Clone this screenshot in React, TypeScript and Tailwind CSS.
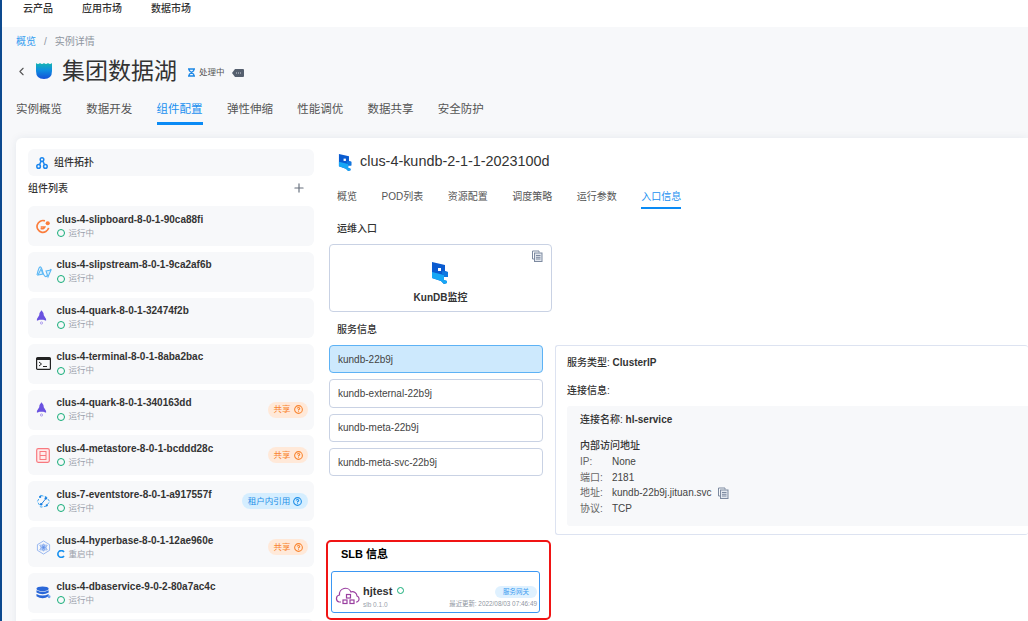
import { ReactNode } from 'react';
import { Plus, ChevronLeft } from 'lucide-react';

type Item = {
    name: string;
    icon: ReactNode;
    status?: string;
    badge?: 'share' | 'tenant';
};

const KunLogo = ({ className }: { className: string }) => (
    <svg viewBox="0 0 17 22" className={className}>
        <path d="M0 0 L13 3 V9 L16 10 V15 H12 V18 L15 19 V21 L12 22 L9 19 L0 16 Z" fill="#0a5bd0" />
        <path d="M0 10 L12 13 V18 L15 19 V21 L12 22 L9 19 L0 16 Z" fill="#17a7f5" />
        <path d="M10 9 L16 10 V15 H12 V13 L10 12.5 Z" fill="#0f78e0" />
        <rect x="6" y="6" width="3" height="3" fill="#fff" />
    </svg>
);

const ShieldLogo = () => (
    <svg viewBox="0 0 18 18" className="h-[18px] w-[18px]">
        <defs>
            <linearGradient id="shield" x1="0" y1="0" x2="0" y2="1">
                <stop offset="0" stopColor="#15b5b0" />
                <stop offset="0.45" stopColor="#0f8fe0" />
                <stop offset="1" stopColor="#1550d8" />
            </linearGradient>
        </defs>
        <path
            d="M1 1 Q3 3 5 1 Q7 3 9 1 Q11 3 13 1 Q15 3 17 1 V9 Q17 17 9 17 Q1 17 1 9 Z"
            fill="url(#shield)"
        />
    </svg>
);

const CopyIcon = ({ className }: { className: string }) => (
    <svg viewBox="0 0 12 12" fill="none" stroke="#7d8aa0" strokeWidth="1" className={className}>
        <path d="M3 9 H1.5 V1 H8 V2.5" />
        <rect x="3.5" y="3" width="7.5" height="8.5" fill="#e4e8ef" />
        <path d="M5 5.5 H9.5 M5 7.3 H9.5 M5 9 H9.5" />
    </svg>
);

const Help = ({ tone }: { tone: string }) => (
    <svg viewBox="0 0 10 10" fill="none" stroke={tone} strokeWidth="1.2" className="h-[9px] w-[9px]">
        <circle cx="5" cy="5" r="4.3" />
        <path d="M3.6 4 Q3.6 2.7 5 2.7 Q6.4 2.7 6.4 3.9 Q6.4 4.7 5 5.2 V6" />
        <path d="M5 7 V7.8" />
    </svg>
);

const SlipboardIcon = () => (
    <svg viewBox="0 0 16 16" fill="none" className="h-[15px] w-[15px]">
        <path d="M13.5 9.5 A6.3 6.3 0 1 1 9.5 2" stroke="#fb7d3c" strokeWidth="1.8" />
        <path d="M5 8.5 H9.5 A3 3 0 0 1 5 10" stroke="#fb7d3c" strokeWidth="1.6" />
        <circle cx="12.5" cy="4.5" r="2.2" fill="#fb7d3c" />
    </svg>
);

const StreamIcon = () => (
    <svg viewBox="0 0 16 14" fill="none" stroke="#5cb8f5" strokeWidth="1.1" className="h-[14px] w-[16px]">
        <path d="M1 10 Q3 1 4.5 2 Q6 3 7 8 Q9 13 11 11 Q12 8 15 4" />
        <path d="M2 10 L5 4 L7 9 Z M10 6 L15 5 L12 12 Z" fill="#d5eefd" />
    </svg>
);

const RocketIcon = () => (
    <svg viewBox="0 0 12 16" className="h-[15px] w-[11px]">
        <path d="M6 0 Q8.5 2.5 8.5 5.5 L11 9.5 V11.5 L8 10.5 H4 L1 11.5 V9.5 L3.5 5.5 Q3.5 2.5 6 0 Z" fill="#6a52e0" />
        <circle cx="6" cy="14" r="1.2" fill="none" stroke="#a797ee" />
    </svg>
);

const TerminalIcon = () => (
    <svg viewBox="0 0 15 13" className="h-[13px] w-[15px]" fill="none">
        <rect x="0.6" y="0.6" width="13.8" height="11.8" rx="1" stroke="#222" strokeWidth="1.2" />
        <rect x="1" y="1" width="13" height="2" fill="#222" />
        <path d="M3 5 L5.5 7 L3 9 M7 9.5 H11" stroke="#222" />
    </svg>
);

const MetastoreIcon = () => (
    <svg viewBox="0 0 14 15" fill="none" stroke="#f8797f" className="h-[15px] w-[14px]">
        <rect x="0.7" y="0.7" width="12.6" height="13.6" rx="1.5" strokeWidth="1.2" fill="#ffecec" />
        <rect x="4" y="3.5" width="6" height="8" />
        <path d="M4 7.5 H10" />
    </svg>
);

const EventIcon = () => (
    <svg viewBox="0 0 16 16" fill="none" stroke="#3aa3f0" className="h-[15px] w-[15px]">
        <path d="M5 1.5 L11 3 L14.5 8 L11 13 L5 14 L1.5 8 Z" strokeDasharray="3 1.5" />
        <path d="M5.5 11 L10.5 5" stroke="#1b7fe0" />
        <circle cx="10.5" cy="4.5" r="1.3" fill="#1b7fe0" stroke="none" />
        <circle cx="5.5" cy="11" r="1.3" fill="#1b7fe0" stroke="none" />
        <circle cx="11.5" cy="12" r="1.2" fill="#1b7fe0" stroke="none" />
        <circle cx="4.5" cy="3" r="1.2" fill="#1b7fe0" stroke="none" />
    </svg>
);

const HyperbaseIcon = () => (
    <svg viewBox="0 0 16 16" fill="none" stroke="#7aa3ee" strokeWidth="0.8" className="h-[15px] w-[15px]">
        <path d="M8 1 L14.5 5 V11 L8 15 L1.5 11 V5 Z" />
        <path d="M8 4 L12 10.5 H4 Z M8 12 L4 5.5 H12 Z" />
        <circle cx="8" cy="8" r="1.5" fill="#5f8fe8" />
    </svg>
);

const DbIcon = () => (
    <svg viewBox="0 0 16 14" className="h-[14px] w-[15px]" fill="#2a67d8">
        <ellipse cx="7" cy="2.5" rx="6.5" ry="2.5" />
        <path d="M0.5 4 Q7 7.5 13.5 4 V6.5 Q7 10 0.5 6.5 Z" />
        <path d="M0.5 8 Q7 11.5 13.5 8 V10.5 Q7 14.5 0.5 10.5 Z" />
        <circle cx="14" cy="11" r="1.5" fill="#6ea0f0" />
    </svg>
);

const items: Item[] = [
    { name: 'clus-4-slipboard-8-0-1-90ca88fi', icon: <SlipboardIcon /> },
    { name: 'clus-4-slipstream-8-0-1-9ca2af6b', icon: <StreamIcon /> },
    { name: 'clus-4-quark-8-0-1-32474f2b', icon: <RocketIcon /> },
    { name: 'clus-4-terminal-8-0-1-8aba2bac', icon: <TerminalIcon /> },
    { name: 'clus-4-quark-8-0-1-340163dd', icon: <RocketIcon />, badge: 'share' },
    { name: 'clus-4-metastore-8-0-1-bcddd28c', icon: <MetastoreIcon />, badge: 'share' },
    { name: 'clus-7-eventstore-8-0-1-a917557f', icon: <EventIcon />, badge: 'tenant' },
    { name: 'clus-4-hyperbase-8-0-1-12ae960e', icon: <HyperbaseIcon />, status: '重启中', badge: 'share' },
    { name: 'clus-4-dbaservice-9-0-2-80a7ac4c', icon: <DbIcon /> },
];

const mainTabs = ['实例概览', '数据开发', '组件配置', '弹性伸缩', '性能调优', '数据共享', '安全防护'];
const subTabs = ['概览', 'POD列表', '资源配置', '调度策略', '运行参数', '入口信息'];
const services = ['kundb-22b9j', 'kundb-external-22b9j', 'kundb-meta-22b9j', 'kundb-meta-svc-22b9j'];

const ComponentRow = ({ item }: { item: Item }) => (
    <div className="flex h-10 shrink-0 items-center rounded-md bg-[#f7f8fa] pl-2 pr-[6px]">
        <div className="flex w-[20.5px] shrink-0 justify-start">{item.icon}</div>
        <div className="flex min-w-0 flex-1 flex-col gap-[2px]">
            <span className="text-[10px] leading-[12px] font-bold text-[#333]">{item.name}</span>
            <div className="flex items-center gap-1 text-[8.5px] leading-[11px] text-[#9aa1ab]">
                {item.status ? (
                    <svg viewBox="0 0 8 8" fill="none" className="h-2 w-2">
                        <path d="M7 2 A3.4 3.4 0 1 0 7 6" stroke="#1590f0" strokeWidth="1.6" />
                    </svg>
                ) : (
                    <span className="h-2 w-2 rounded-full border-[1.7px] border-[#14ad78]" />
                )}
                {item.status ?? '运行中'}
            </div>
        </div>
        {item.badge === 'share' && (
            <span className="flex h-4 w-10 items-center justify-center gap-[3px] rounded-full bg-[#ffe9d9] text-[8.5px] text-[#f98530]">
                共享 <Help tone="#f98530" />
            </span>
        )}
        {item.badge === 'tenant' && (
            <span className="flex h-4 w-[66px] items-center justify-center gap-[3px] rounded-full bg-[#d5eeff] text-[8.5px] text-[#1f8fe8]">
                租户内引用 <Help tone="#1f8fe8" />
            </span>
        )}
    </div>
);

const Sidebar = () => (
    <aside className="flex w-[286px] shrink-0 flex-col">
        <div className="flex h-[27px] items-center gap-[6px] rounded-md bg-[#f7f8fa] pl-2 text-[10px] font-medium text-[#333]">
            <svg viewBox="0 0 12 12" fill="none" stroke="#1b86ee" strokeWidth="1.5" className="h-3 w-3">
                <circle cx="6" cy="2.6" r="1.8" />
                <circle cx="2.6" cy="9.4" r="1.8" />
                <circle cx="9.4" cy="9.4" r="1.8" />
                <path d="M5 4.2 L3.5 7.8 M7 4.2 L8.5 7.8" />
            </svg>
            组件拓扑
        </div>
        <div className="mt-[5px] mb-[11px] flex h-[14px] items-center justify-between pr-[8px] text-[10px] font-medium text-[#333]">
            组件列表
            <Plus size={14} strokeWidth={2} className="text-[#666f7d]" />
        </div>
        <div className="flex flex-col gap-[5.9px]">
            {items.map(item => (
                <ComponentRow key={item.name + item.badge} item={item} />
            ))}
            <div className="h-10 shrink-0 rounded-md bg-[#f7f8fa]" />
        </div>
    </aside>
);

const DetailLine = ({ label, children }: { label: string; children: ReactNode }) => (
    <div className="flex h-[15.5px] items-center">
        <span className="w-[32px] shrink-0 text-[#666]">{label}</span>
        {children}
    </div>
);

const ServicePanel = () => (
    <div className="ml-3 flex h-[190px] flex-1 flex-col rounded-[3px] border border-r-0 border-[#dde3f1] pt-[10px] pl-[11px] text-[10px]">
        <div className="h-[14px] leading-[14px] font-medium text-[#333]">
            服务类型: <span className="font-bold">ClusterIP</span>
        </div>
        <div className="mt-[14px] h-[14px] leading-[14px] font-medium text-[#333]">连接信息:</div>
        <div className="mt-[8px] flex h-[120px] flex-col rounded-l-[3px] bg-[#f7f8fa] pt-[7px] pl-[13px] text-[#444]">
            <div className="h-[14px] leading-[14px] font-medium text-[#333]">
                连接名称: <span className="font-bold">hl-service</span>
            </div>
            <div className="mt-[12px] mb-[1px] h-[14px] leading-[14px] font-medium text-[#333]">内部访问地址</div>
            <DetailLine label="IP:">None</DetailLine>
            <DetailLine label="端口:">2181</DetailLine>
            <DetailLine label="地址:">
                kundb-22b9j.jituan.svc
                <CopyIcon className="ml-[5px] h-3 w-3" />
            </DetailLine>
            <DetailLine label="协议:">TCP</DetailLine>
        </div>
    </div>
);

const SlbCard = () => (
    <div className="mt-[5px] -ml-[3px] flex h-[80px] w-[225px] flex-col rounded-[5px] border-2 border-[#f01414] pt-[4px] pl-[3px]">
        <div className="h-[16px] pl-[10px] text-[11px] leading-[16px] font-bold text-black">SLB 信息</div>
        <div className="mt-[9px] flex h-[42px] w-[209px] items-center rounded-[3px] border border-[#3b97f3] pr-[2px] pl-[3px]">
            <svg viewBox="0 0 26 20" fill="none" stroke="#9a3fa0" strokeWidth="1.2" className="mt-[7px] h-[20px] w-[26px] shrink-0">
                <path d="M6 16 H4 A3.6 3.6 0 0 1 4.5 9 A6 6 0 0 1 16 6 A4.5 4.5 0 0 1 22 10 A3.2 3.2 0 0 1 22 16 H21" />
                <rect x="11.5" y="8.5" width="4" height="3.5" />
                <rect x="8" y="14" width="4" height="3.5" />
                <rect x="15" y="14" width="4" height="3.5" />
            </svg>
            <div className="ml-[2px] flex flex-col pt-[8px]">
                <div className="flex items-center gap-[5px] text-[11px] leading-[14px] font-bold text-[#333]">
                    hjtest
                    <span className="h-[7px] w-[7px] rounded-full border-[1.7px] border-[#14ad78]" />
                </div>
                <span className="mt-[2px] text-[6.5px] leading-[9px] text-[#9aa1ab]">slb 0.1.0</span>
            </div>
            <div className="ml-auto flex flex-col items-end pt-[9px]">
                <span className="flex h-[12px] w-[42px] items-center justify-center rounded-full bg-[#dff1ff] text-[6.5px] text-[#3a9cf0]">
                    服务网关
                </span>
                <span className="mt-[1px] text-[6.4px] leading-[9px] whitespace-nowrap text-[#8f96a1]">
                    最近更新: 2022/08/03 07:46:49
                </span>
            </div>
        </div>
    </div>
);

const Content = () => (
    <section className="ml-[15px] flex min-w-0 flex-1 flex-col">
        <div className="mt-[1px] ml-[9px] flex h-[24px] items-center gap-[7px]">
            <KunLogo className="h-[17px] w-[15px]" />
            <span className="text-[14.4px] text-[#333]">clus-4-kundb-2-1-1-2023100d</span>
        </div>
        <div className="mt-[14px] ml-2 flex h-[21px] gap-[24.5px]">
            {subTabs.map(tab => (
                <div
                    key={tab}
                    className={`h-[21px] border-b-2 pt-[2px] text-[10px] leading-[14px] ${tab === '入口信息' ? 'border-[#0b8bf5] text-[#1a90f0]' : 'border-transparent text-[#555]'}`}
                >
                    {tab}
                </div>
            ))}
        </div>
        <div className="mt-[13px] ml-2 h-[14px] text-[10px] leading-[14px] font-medium text-[#333]">运维入口</div>
        <div className="relative mt-[8px] flex h-[68px] w-[223px] flex-col items-center rounded-[4px] border border-[#c9d2e4] pt-[17px]">
            <CopyIcon className="absolute top-[5px] right-[8px] h-3 w-3" />
            <KunLogo className="h-[22px] w-[17px]" />
            <span className="mt-[7px] text-[10px] leading-[14px] font-bold text-[#333]">KunDB监控</span>
        </div>
        <div className="mt-[11px] ml-2 h-[14px] text-[10px] leading-[14px] font-medium text-[#333]">服务信息</div>
        <div className="mt-[8px] flex">
            <div className="flex w-[214px] shrink-0 flex-col gap-[6px]">
                {services.map((s, i) => (
                    <div
                        key={s}
                        className={`flex h-[28.33px] items-center rounded-[4px] border pl-[8px] text-[10px] text-[#444] ${i === 0 ? 'border-[#5db2f5] bg-[#cde9fd]' : 'border-[#c9d2e4] bg-white'}`}
                    >
                        {s}
                    </div>
                ))}
            </div>
            <ServicePanel />
        </div>
        <SlbCard />
    </section>
);

export default function App() {
    return (
        <div
            className="flex h-[621px] w-[1028px] flex-col overflow-hidden border-l-2 border-[#0d4a8f] bg-[#f7f8fa]"
            style={{ fontFamily: '"Liberation Sans", "Noto Sans CJK SC", sans-serif' }}
        >
            <header className="flex h-[27px] shrink-0 items-start gap-[29px] bg-white pt-[2px] pl-[21px] text-[10px] leading-[14px] font-medium text-[#333]">
                <span>云产品</span>
                <span>应用市场</span>
                <span>数据市场</span>
            </header>
            <div className="mt-[7px] ml-[14px] flex h-[14px] items-center text-[10px] text-[#8f96a1]">
                <span className="text-[#2f9bf0]">概览</span>
                <span className="mx-[8px]">/</span>
                实例详情
            </div>
            <div className="mt-[7px] ml-[14px] flex h-[32px] items-center">
                <ChevronLeft size={13} strokeWidth={2} className="ml-[-1px] text-[#555]" />
                <span className="ml-[7px]"><ShieldLogo /></span>
                <span className="ml-[9px] text-[23px] text-[#333]">集团数据湖</span>
                <svg viewBox="0 0 8 10" className="mt-[3px] ml-[11px] h-[9px] w-[7px]" fill="none" stroke="#1e88e5" strokeWidth="1.5">
                    <path d="M0 1 H8 M0 9 H8 M1.5 1 V3 L6.5 7 V9 M6.5 1 V3 L1.5 7 V9" />
                </svg>
                <span className="mt-[3px] ml-[4px] text-[8.5px] text-[#555]">处理中</span>
                <svg viewBox="0 0 12 8" className="mt-[3px] ml-[7px] h-[8px] w-[12px]" fill="#555f6e">
                    <path d="M3 0 H11 Q12 0 12 1 V7 Q12 8 11 8 H3 L0 4 Z" />
                    <path d="M4 4 H10" stroke="#cfd4da" strokeDasharray="1 1" />
                </svg>
            </div>
            <nav className="mt-[9px] ml-[14px] flex h-[29px] shrink-0 gap-[24.3px]">
                {mainTabs.map(tab => (
                    <div
                        key={tab}
                        className={`h-[29px] border-b-[3px] pt-[5px] text-[11.5px] leading-[16px] ${tab === '组件配置' ? 'border-[#0b8bf5] text-[#1a90f0]' : 'border-transparent text-[#555]'}`}
                    >
                        {tab}
                    </div>
                ))}
            </nav>
            <main className="mt-[13px] ml-[14px] flex flex-1 rounded-tl-md bg-white pt-[11px] pl-3 shadow-[0_0_8px_rgba(30,50,90,0.08)]">
                <Sidebar />
                <Content />
            </main>
        </div>
    );
}
